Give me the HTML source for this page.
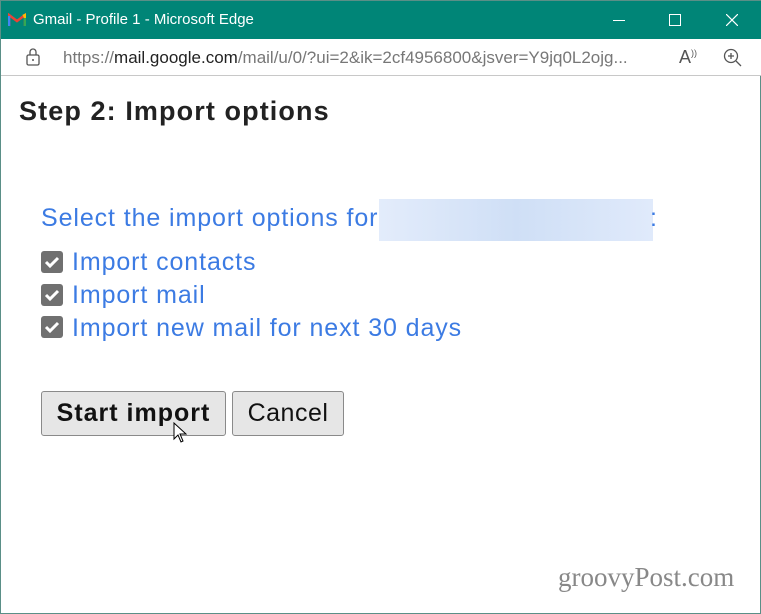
<!DOCTYPE html>
<html><head><style>
*{margin:0;padding:0;box-sizing:border-box}
body{width:761px;height:614px;overflow:hidden;background:#fff;font-family:"Liberation Sans",sans-serif;position:relative;border:1px solid #5a8f87}
.t{position:absolute;left:0;top:0;width:761px;height:38px;background:#008577;color:#fff;font-size:15px}
.a{position:absolute;left:0;top:38px;width:761px;height:37px;background:#fff;border-bottom:1px solid #c8c8c8;font-size:17px;color:#333}
.abs{position:absolute;white-space:nowrap}
.blue{color:#3c7be3;font-size:25px;letter-spacing:0.9px}
.cb{position:absolute;left:40px;width:22px;height:22px;background:#707070;border-radius:3px}
.btn{position:absolute;top:390px;height:45px;background:#e6e6e6;border:1px solid #8a8a8a;border-radius:3px;font-size:25px;color:#111;text-align:center;line-height:43px}
</style></head><body>
<div class="t">
<svg class="abs" style="left:7px;top:12px" width="18" height="14" viewBox="0 0 18 14"><path d="M1 13V2l8 6 8-6v11" fill="none" stroke="#ea4335" stroke-width="2.5"/><path d="M1 13V3" stroke="#4285f4" stroke-width="2.5"/><path d="M17 13V3" stroke="#34a853" stroke-width="2.5"/><path d="M15 3l2-1v3" stroke="#fbbc04" stroke-width="2.5" fill="none"/></svg>
<span class="abs" style="left:32px;top:10px">Gmail - Profile 1 - Microsoft Edge</span>
<div class="abs" style="left:612px;top:19px;width:12px;height:1px;background:#fff"></div>
<div class="abs" style="left:668px;top:13px;width:12px;height:12px;border:1px solid #fff"></div>
<svg class="abs" style="left:725px;top:13px" width="12" height="12"><path d="M0 0L12 12M12 0L0 12" stroke="#fff" stroke-width="1.2"/></svg>
</div>
<div class="a">
<svg class="abs" style="left:25px;top:9px" width="14" height="18" viewBox="0 0 14 18"><rect x="1" y="7" width="12" height="10" rx="1.5" fill="none" stroke="#555" stroke-width="1.3"/><path d="M4 7V4a3 3 0 0 1 6 0v3" fill="none" stroke="#555" stroke-width="1.3"/><circle cx="7" cy="12" r="1" fill="#555"/></svg>
<span class="abs" style="left:62px;top:9px;color:#777">https://<span style="color:#222">mail.google.com</span>/mail/u/0/?ui=2&amp;ik=2cf4956800&amp;jsver=Y9jq0L2ojg...</span>
<span class="abs" style="left:678px;top:8px;font-size:18px;color:#555">A<sup style="font-size:9px">))</sup></span>
<svg class="abs" style="left:722px;top:9px" width="20" height="20"><circle cx="8" cy="8" r="6.5" fill="none" stroke="#555" stroke-width="1.3"/><path d="M8 5v6M5 8h6M13 13l5 5" stroke="#555" stroke-width="1.3"/></svg>
</div>
<div class="abs" style="left:18px;top:95px;font-size:27px;font-weight:bold;color:#222;letter-spacing:1.1px">Step 2: Import options</div>
<div class="abs blue" style="left:40px;top:203px">Select the import options for</div>
<div class="abs" style="left:378px;top:198px;width:274px;height:42px;background:linear-gradient(90deg,#e3ecfb,#cfdff6 50%,#e0eafb)"></div>
<div class="abs blue" style="left:649px;top:203px">:</div>
<div class="cb" style="top:250px"></div><div class="cb" style="top:283px"></div><div class="cb" style="top:315px"></div>
<svg class="abs" style="left:40px;top:250px" width="22" height="88"><g fill="none" stroke="#fff" stroke-width="3"><path d="M5 11l4 4 8-8"/><path d="M5 44l4 4 8-8"/><path d="M5 76l4 4 8-8"/></g></svg>
<div class="abs blue" style="left:71px;top:247px">Import contacts</div>
<div class="abs blue" style="left:71px;top:280px">Import mail</div>
<div class="abs blue" style="left:71px;top:313px">Import new mail for next 30 days</div>
<div class="btn" style="left:40px;width:185px;font-weight:bold;letter-spacing:1px">Start import</div>
<div class="btn" style="left:231px;width:112px;letter-spacing:0.5px">Cancel</div>
<svg class="abs" style="left:172px;top:421px" width="14" height="22"><path d="M1 1v16l4-4 3 7 2-1-3-7h6z" fill="#fff" stroke="#000"/></svg>
<div class="abs" style="left:557px;top:561px;font-family:'Liberation Serif',serif;font-size:27px;color:#888">groovyPost.com</div>
</body></html>
